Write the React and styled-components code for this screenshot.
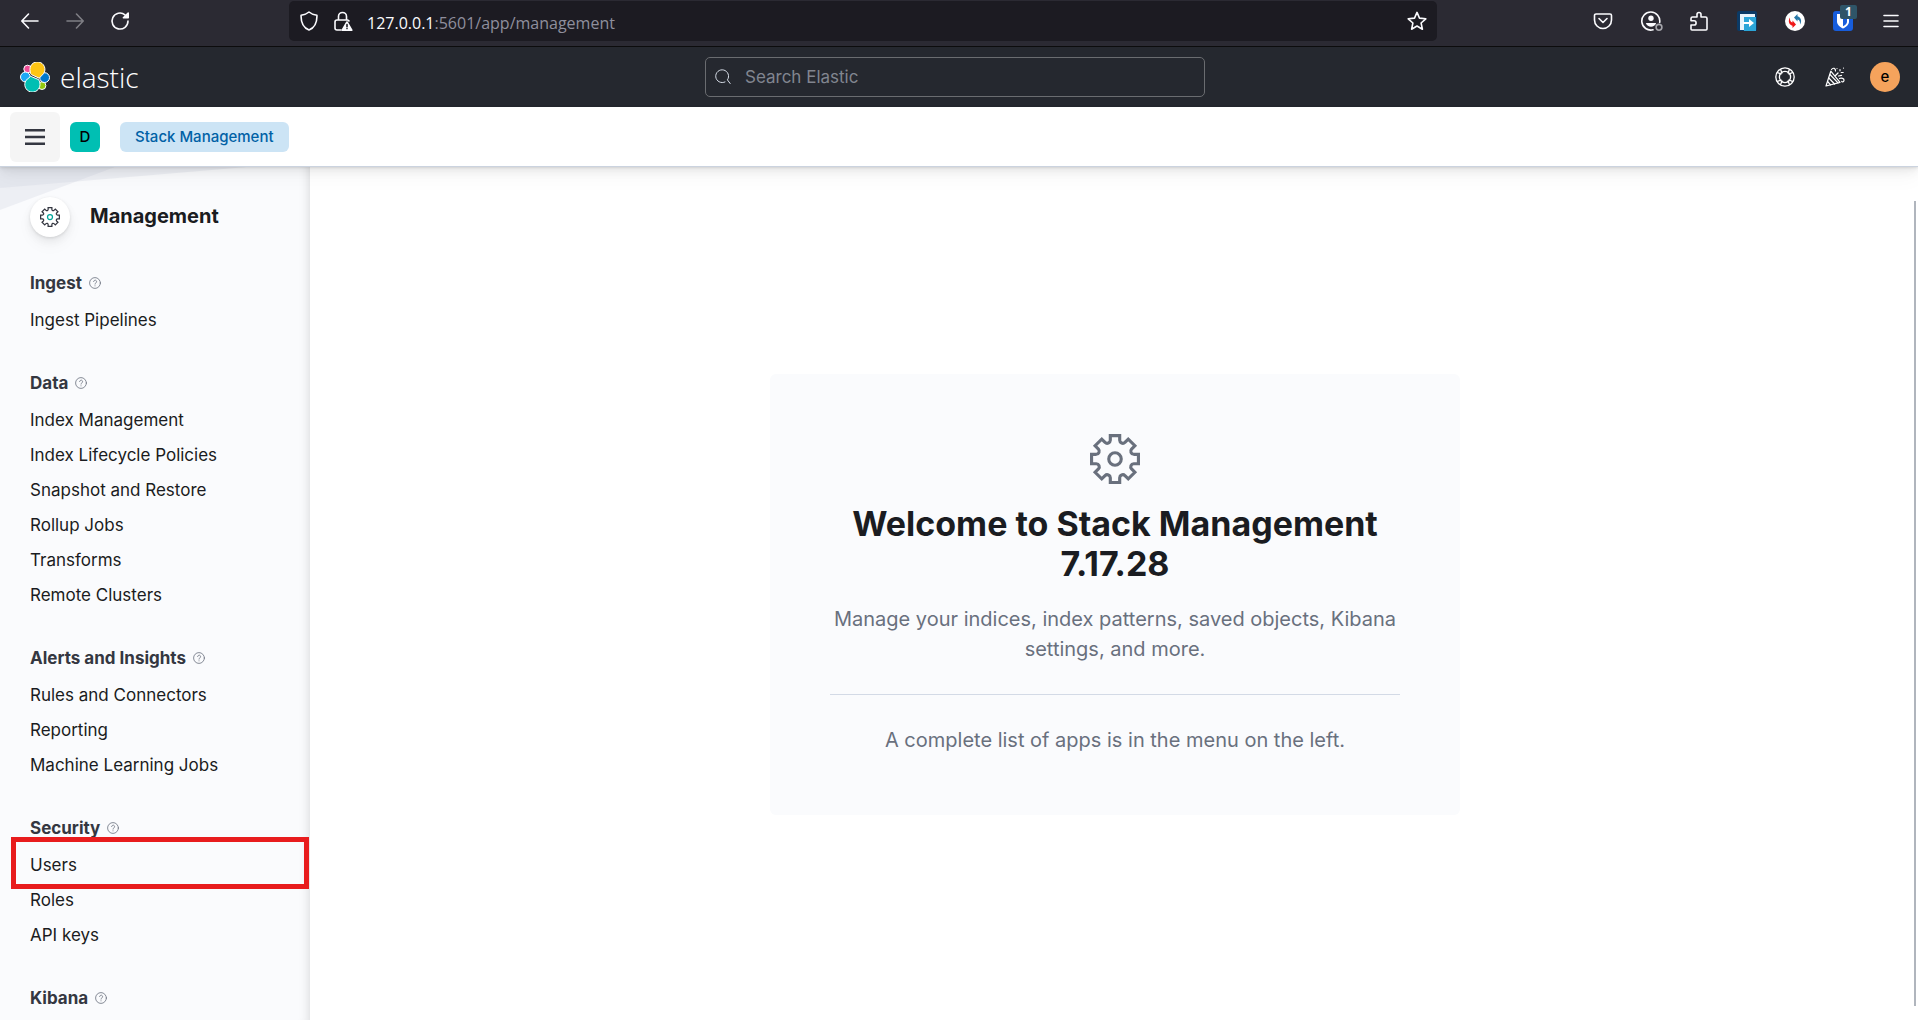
import React from "react";
import styled, { createGlobalStyle } from "styled-components";

const GlobalStyle = createGlobalStyle`
  * { box-sizing: border-box; }
  body {
    margin: 0;
    background: #fff;
    color: #1a1c21;
    font-family: Inter, "Liberation Sans", sans-serif;
  }
  h1, h2, p, ul { margin: 0; padding: 0; }
  button { border: 0; padding: 0; font: inherit; cursor: pointer; }
  svg { display: block; flex: none; }
`;

const Page = styled.div`
  height: 100vh;
  display: flex;
  flex-direction: column;
  overflow: hidden;
`;

/* Browser toolbar */

const BrowserBar = styled.div`
  display: flex;
  align-items: center;
  padding: 1px 12px 5px 15px;
  background: #2b2a33;
  border-bottom: 1px solid #0c0c0d;
`;

const NavButtons = styled.div`
  display: flex;
  gap: 15px;
  margin-right: 154px;
`;

const BarButton = styled.button`
  width: 30px;
  height: 30px;
  display: grid;
  place-items: center;
  background: none;
  color: #fbfbfe;
  opacity: ${(p) => (p.disabled ? 0.4 : 1)};
`;

const AddressBar = styled.div`
  flex: 1;
  height: 40px;
  display: flex;
  align-items: center;
  gap: 4px;
  padding: 0 5px;
  border-radius: 5px;
  background: #1c1b22;
`;

const Address = styled.div`
  flex: 1;
  margin-left: 5px;
  padding-top: 3px;
  color: #8f8f9d;
  font: 16px/24px "Open Sans", "Noto Sans", sans-serif;
  outline: none;
`;

const Host = styled.span`
  color: #fbfbfe;
`;

const Extensions = styled.div`
  display: flex;
  gap: 18px;
  margin-left: 151px;
`;

const BadgeHolder = styled.span`
  position: relative;
`;

const Badge = styled.span`
  position: absolute;
  top: -6px;
  left: 7px;
  width: 17px;
  height: 14px;
  border-radius: 2px;
  background: #2f5568;
  color: #fff;
  font: 700 12px/14px "Open Sans", sans-serif;
  text-align: center;
`;

/* Kibana header */

const Header = styled.header`
  display: grid;
  grid-template-columns: 1fr 500px 1fr;
  align-items: center;
  height: 60px;
  padding: 0 18px 0 10px;
  background: #25282f;
`;

const Brand = styled.a`
  display: flex;
  align-items: center;
  gap: 10px;
  padding-left: 10px;
  color: #fff;
  text-decoration: none;
  font: 300 28px/30px "Open Sans", "Noto Sans", sans-serif;
`;

const Search = styled.label`
  display: flex;
  align-items: center;
  height: 40px;
  padding: 0 9px;
  gap: 14px;
  border: 1px solid #6a6c70;
  border-radius: 5px;
  color: #dfe5ef;
`;

const SearchInput = styled.input`
  flex: 1;
  border: 0;
  padding: 0;
  outline: none;
  background: none;
  color: #dfe5ef;
  font: 17px/24px Inter, "Liberation Sans", sans-serif;
  &::placeholder { color: #81858f; opacity: 1; }
`;

const HeaderActions = styled.div`
  display: flex;
  justify-content: flex-end;
  gap: 20px;
`;

const IconButton = styled.button`
  width: 30px;
  height: 30px;
  display: grid;
  place-items: center;
  background: none;
  color: #fff;
`;

const Avatar = styled.button`
  width: 30px;
  height: 30px;
  border-radius: ${(p) => (p.$round ? "50%" : "6px")};
  background: ${(p) => p.$color};
  color: #000;
  font-size: 15px;
  font-weight: 500;
  line-height: 30px;
`;

/* Breadcrumb bar */

const SubHeader = styled.nav`
  position: relative;
  z-index: 1;
  display: flex;
  align-items: center;
  height: 60px;
  padding: 0 10px;
  gap: 10px;
  background: #fff;
  border-bottom: 1px solid #cbd3df;
  box-shadow: 0 1px 2px rgba(0, 0, 0, 0.07), 0 2px 5px rgba(0, 0, 0, 0.05),
    0 5px 10px rgba(0, 0, 0, 0.05), 0 12px 20px rgba(0, 0, 0, 0.03);
`;

const MenuButton = styled.button`
  width: 50px;
  height: 50px;
  display: grid;
  place-items: center;
  border-radius: 6px;
  background: #f5f5f5;
  color: #343741;
`;

const Breadcrumb = styled.a`
  height: 30px;
  margin-left: 10px;
  padding: 0 15px;
  border-radius: 6px;
  background: #cce4f5;
  color: #0061a6;
  font-size: 15px;
  font-weight: 500;
  line-height: 30px;
  text-decoration: none;
`;

/* Page body */

const Body = styled.div`
  flex: 1;
  min-height: 0;
  display: flex;
`;

const Sidebar = styled.aside`
  position: relative;
  width: 310px;
  flex: none;
  display: flex;
  flex-direction: column;
  gap: 32px;
  padding: 30px;
  overflow: hidden;
  background: #fafbfd;
  box-shadow: inset -12px 0 12px -12px rgba(0, 0, 0, 0.16);
`;

const Backdrop = styled.svg`
  position: absolute;
  top: 0;
  left: 0;
`;

const SolutionHeader = styled.div`
  position: relative;
  display: flex;
  align-items: center;
  gap: 20px;
  padding-bottom: 1px;
`;

const SolutionIcon = styled.span`
  width: 40px;
  height: 40px;
  display: grid;
  place-items: center;
  border-radius: 50%;
  background: #fff;
  color: #343741;
  box-shadow: 0 1px 3px rgba(0, 0, 0, 0.1), 0 4px 8px rgba(0, 0, 0, 0.06),
    0 8px 16px rgba(0, 0, 0, 0.04);
`;

const SolutionTitle = styled.h2`
  font-size: 20px;
  font-weight: 700;
  line-height: 38px;
  padding-bottom: 2px;
`;

const SectionTitle = styled.h2`
  display: flex;
  align-items: center;
  gap: 7px;
  margin-bottom: 7px;
  color: #343741;
  font-size: 17px;
  font-weight: 700;
  line-height: 26px;
`;

const HelpIcon = styled.svg`
  color: #69707d;
`;

const NavItem = styled.li`
  position: relative;
  list-style: none;
  line-height: 35px;
`;

const NavLink = styled.a`
  color: #1a1c21;
  font-size: 17px;
  text-decoration: none;
`;

const Highlight = styled.span`
  position: absolute;
  top: -11px;
  right: -29px;
  bottom: -6px;
  left: -19px;
  border: 5px solid #e81c1d;
  pointer-events: none;
`;

const Main = styled.main`
  position: relative;
  flex: 1;
  display: grid;
  place-items: center;
  padding: 2px 0 0 2px;
`;

const ScrollThumb = styled.div`
  position: absolute;
  top: 34px;
  right: 2px;
  bottom: 14px;
  width: 2px;
  background: #b0b5bd;
`;

const Prompt = styled.section`
  width: 690px;
  padding: 60px;
  display: flex;
  flex-direction: column;
  align-items: center;
  border-radius: 6px;
  background: #fafbfd;
  color: #69707d;
  text-align: center;
`;

const PromptTitle = styled.h1`
  margin: 20px 0;
  color: #1a1c21;
  font-size: 34px;
  font-weight: 700;
  line-height: 40px;
`;

const PromptText = styled.p`
  font-size: 20px;
  line-height: 30px;
`;

const Rule = styled.hr`
  width: 100%;
  margin: 30px 0;
  border: 0;
  border-top: 1px solid #d3dae6;
`;

/* Icons */

const spin = ([x, y], deg) => {
  const a = (deg * Math.PI) / 180;
  const px = 16 + x * Math.cos(a) - y * Math.sin(a);
  const py = 16 + x * Math.sin(a) + y * Math.cos(a);
  return `${px.toFixed(2)} ${py.toFixed(2)}`;
};

const gearPath = Array.from({ length: 8 }, (_, i) => {
  const d = i * 45;
  return `${i ? "L" : "M"}${spin([-3, -12], d)}L${spin([-3, -15], d)}L${spin([3, -15], d)}L${spin([3, -12], d)}A2 2 0 0 0 ${spin([-3, -12], d + 45)}`;
}).join("");

const Gear = ({ size, hub = "currentColor" }) => (
  <svg width={size} height={size} viewBox="0 0 32 32" fill="none" stroke="currentColor" strokeWidth="2">
    <path d={gearPath + "Z"} />
    <circle cx="16" cy="16" r="4" stroke={hub} />
  </svg>
);

const Line = ({ size = 20, width = 1.6, children }) => (
  <svg width={size} height={size} viewBox="0 0 20 20" fill="none" stroke="currentColor" strokeWidth={width} strokeLinecap="round" strokeLinejoin="round">
    {children}
  </svg>
);

const Cluster = () => (
  <svg width="30" height="30" viewBox="0 0 30 30" stroke="#fff" strokeWidth="1">
    <circle cx="7.6" cy="7" r="3.8" fill="#f04e98" />
    <circle cx="22" cy="23.6" r="3.9" fill="#93c90e" />
    <circle cx="5.4" cy="15" r="4.9" fill="#1ba9f5" />
    <circle cx="24.6" cy="15.6" r="4.9" fill="#07c" />
    <path d="M11.3 12.6 19.2 16.2 23.6 11.6A7.5 7.5 0 1 0 10.2 9.4Q10.2 11.6 11.3 12.6Z" fill="#fec514" />
    <path d="M10.6 14.3 18.6 17.6Q20.2 19.8 20 22.4A7.6 7.6 0 1 1 6 18.4Z" fill="#00bfb3" />
  </svg>
);

const Help = () => (
  <HelpIcon width="12" height="12" viewBox="0 0 12 12" fill="none" stroke="currentColor" strokeWidth="0.8" strokeLinecap="round">
    <circle cx="6" cy="6" r="5.4" />
    <path d="M4.6 4.6a1.5 1.5 0 1 1 2.3 1.3c-.6.4-.9.6-.9 1.2M6 8.8v.1" />
  </HelpIcon>
);

const sections = [
  { title: "Ingest", items: ["Ingest Pipelines"] },
  {
    title: "Data",
    items: [
      "Index Management",
      "Index Lifecycle Policies",
      "Snapshot and Restore",
      "Rollup Jobs",
      "Transforms",
      "Remote Clusters",
    ],
  },
  { title: "Alerts and Insights", items: ["Rules and Connectors", "Reporting", "Machine Learning Jobs"] },
  { title: "Security", items: ["Users", "Roles", "API keys"] },
  { title: "Kibana", items: [] },
];

const highlighted = "Users";

function Browser() {
  return (
    <BrowserBar>
      <NavButtons>
        <BarButton aria-label="Back">
          <Line><path d="M18 10H2M8.5 3 1.8 10l6.7 7" /></Line>
        </BarButton>
        <BarButton aria-label="Forward" disabled>
          <Line><path d="M2 10h16M11.5 3l6.7 7-6.7 7" /></Line>
        </BarButton>
        <BarButton aria-label="Reload">
          <Line>
            <path d="M18 10a8 8 0 1 1-3-6.2" />
            <path d="M18.2 2v4.8h-4.8z" fill="currentColor" />
          </Line>
        </BarButton>
      </NavButtons>
      <AddressBar>
        <BarButton aria-label="Tracking protection">
          <Line><path d="M10 1c2 1.700 4.800 2.800 7.900 3.300C18.200 11.500 15.500 16.700 10 19 4.500 16.700 1.800 11.500 2.100 4.300 5.200 3.800 8 2.700 10 1Z" /></Line>
        </BarButton>
        <BarButton aria-label="Connection is not secure">
          <Line>
            <path d="M5.500 9V5.500a4 4 0 0 1 8 0V9M8 19H4a2 2 0 0 1-2-2v-6a2 2 0 0 1 2-2h10.500a2 2 0 0 1 1.500 1" />
            <path d="m14 11 4.800 8.200H9.200Z" fill="currentColor" />
            <path d="M14 13.500v2.200M14 17.500v.1" stroke="#1c1b22" />
          </Line>
        </BarButton>
        <Address role="textbox" aria-label="Address" contentEditable suppressContentEditableWarning spellCheck={false}>
          <Host>127.0.0.1</Host>:5601/app/management
        </Address>
        <BarButton aria-label="Bookmark this page">
          <Line><path d="m10 1.400 2.500 5.700 6.300.7-4.700 4.200 1.300 6.200-5.400-3.200-5.400 3.200 1.300-6.200L1.200 7.800l6.300-.7Z" /></Line>
        </BarButton>
      </AddressBar>
      <Extensions>
        <BarButton aria-label="Save to Pocket">
          <Line>
            <path d="M3 3h14a1.500 1.500 0 0 1 1.500 1.500V9a8.500 8.500 0 0 1-17 0V4.500A1.500 1.500 0 0 1 3 3Z" />
            <path d="m6 7.500 4 4 4-4" />
          </Line>
        </BarButton>
        <BarButton aria-label="Account">
          <svg width="24" height="20" viewBox="-2 0 24 20" fill="none" stroke="currentColor" strokeWidth="1.6" strokeLinecap="round">
            <path d="M12 18.800a9 9 0 1 1 6.700-7.400" />
            <circle cx="10" cy="7.300" r="2.700" fill="currentColor" stroke="none" />
            <path d="M4.800 12h10.400c-1 2.600-2.800 3.800-5.200 3.800S5.800 14.600 4.800 12Z" fill="currentColor" stroke="none" />
            <circle cx="18" cy="16.300" r="2.900" stroke="#a5a5ab" />
          </svg>
        </BarButton>
        <BarButton aria-label="Extensions">
          <Line>
            <path d="M3 19a1 1 0 0 1-1-1v-4h3a1.800 1.800 0 0 0 0-4.200H2V7.500a1.500 1.500 0 0 1 1.500-1.500H8V3.500a2 2 0 0 1 4 0V6h4.500A1.500 1.500 0 0 1 18 7.500V18a1 1 0 0 1-1 1Z" />
          </Line>
        </BarButton>
        <BarButton aria-label="Proxy extension">
          <svg width="20" height="20" viewBox="0 0 20 20">
            <rect width="20" height="20" rx="2" fill="#0b3a66" />
            <path d="M4 6h15v14H7z" fill="#2ba5d8" />
            <path d="M3 19V3h15v3H7v13z" fill="#e9f4fb" />
            <path d="M6 11h6V8l5 4-5 4v-3H6z" fill="#fff" />
          </svg>
        </BarButton>
        <BarButton aria-label="Sync extension">
          <svg width="20" height="20" viewBox="0 0 20 20">
            <circle cx="10" cy="10" r="10" fill="#fff" />
            <path d="M9 6.500 12.500 3v2.200c3.500 1 4.800 4.800 2.500 8.300.3-3-.6-4.600-2.500-5v2Z" fill="#2878a8" />
            <path d="M11 13.500 7.500 17v-2.200C4 13.800 2.700 10 5 6.500c-.3 3 .6 4.600 2.500 5v-2Z" fill="#f01818" />
          </svg>
        </BarButton>
        <BarButton aria-label="Password manager">
          <BadgeHolder>
            <svg width="20" height="20" viewBox="0 0 20 20">
              <rect width="20" height="20" rx="3" fill="#175ddc" />
              <path d="M4 3h12v7.500c0 3.300-3 5.500-6 7-3-1.500-6-3.700-6-7Z" fill="#fff" />
              <path d="M10 5h4v5.500c0 2-1.500 3.500-4 4.800Z" fill="#175ddc" />
            </svg>
            <Badge>1</Badge>
          </BadgeHolder>
        </BarButton>
        <BarButton aria-label="Open application menu">
          <Line><path d="M3 4.500h14M3 10h14M3 15.500h14" /></Line>
        </BarButton>
      </Extensions>
    </BrowserBar>
  );
}

export default function App() {
  return (
    <Page>
      <GlobalStyle />
      <Browser />
      <Header>
        <Brand href="#home">
          <Cluster />
          elastic
        </Brand>
        <Search>
          <Line size={16} width={1.2}>
            <path d="M12.500 16.200a8 8 0 1 1 3-2.600l3.500 4.600" />
          </Line>
          <SearchInput type="search" placeholder="Search Elastic" aria-label="Search Elastic" />
        </Search>
        <HeaderActions>
          <IconButton aria-label="Help menu">
            <Line width={1.3}>
              <circle cx="10" cy="10" r="9.200" />
              <circle cx="10" cy="10" r="5.600" />
              <path d="M2.600 5.600 6 7M5.600 2.600 7 6M17.400 5.600 14 7M14.400 2.600 13 6M2.600 14.400 6 13M5.600 17.400 7 14M17.400 14.400 14 13M14.400 17.400 13 14" />
            </Line>
          </IconButton>
          <IconButton aria-label="What's new">
            <Line width={1.2}>
              <path d="M5.800 4.200 15 15.300 1 19Z" />
              <path d="m5 7.500 8 8.300M3.800 11l5.800 6M2.600 14.500l3 3.400" />
              <path d="M6.500 2.500C8 .300 10.800 1.200 10.500 4M10.500 8.500 13 6M13.500 9l3-.7M12 1.500v.1M15 2.500v1.300M18.500 1v.1M16.200 5.500h2M14.500 11.500c2-1 4.800 0 4.500 2-.2 1.600-2 1.800-2.300.8" />
            </Line>
          </IconButton>
          <Avatar $round $color="#f5a35c" aria-label="Account menu">e</Avatar>
        </HeaderActions>
      </Header>
      <SubHeader>
        <MenuButton aria-label="Toggle primary navigation">
          <svg width="20" height="16" viewBox="0 0 20 16" fill="currentColor">
            <path d="M0 0h20v2.500H0zM0 6.700h20v2.600H0zM0 13.500h20v2.500H0z" />
          </svg>
        </MenuButton>
        <Avatar $color="#00bfb3" aria-label="Default space">D</Avatar>
        <Breadcrumb href="#management">Stack Management</Breadcrumb>
      </SubHeader>
      <Body>
        <Sidebar>
          <Backdrop width="250" height="44" viewBox="0 0 250 44" fill="#cfd4e2" fillOpacity="0.3">
            <path d="M0 0h115L0 43z" />
            <path d="M0 0h247L0 21z" />
          </Backdrop>
          <SolutionHeader>
            <SolutionIcon>
              <Gear size={20} hub="#00a69b" />
            </SolutionIcon>
            <SolutionTitle>Management</SolutionTitle>
          </SolutionHeader>
          {sections.map((section) => (
            <section key={section.title}>
              <SectionTitle>
                {section.title}
                <Help />
              </SectionTitle>
              <ul>
                {section.items.map((item) => (
                  <NavItem key={item}>
                    <NavLink href="#management">{item}</NavLink>
                    {item === highlighted && <Highlight />}
                  </NavItem>
                ))}
              </ul>
            </section>
          ))}
        </Sidebar>
        <Main>
          <Prompt>
            <Gear size={50} />
            <PromptTitle>Welcome to Stack Management 7.17.28</PromptTitle>
            <PromptText>
              Manage your indices, index patterns, saved objects, Kibana settings, and more.
            </PromptText>
            <Rule />
            <PromptText>A complete list of apps is in the menu on the left.</PromptText>
          </Prompt>
          <ScrollThumb />
        </Main>
      </Body>
    </Page>
  );
}
